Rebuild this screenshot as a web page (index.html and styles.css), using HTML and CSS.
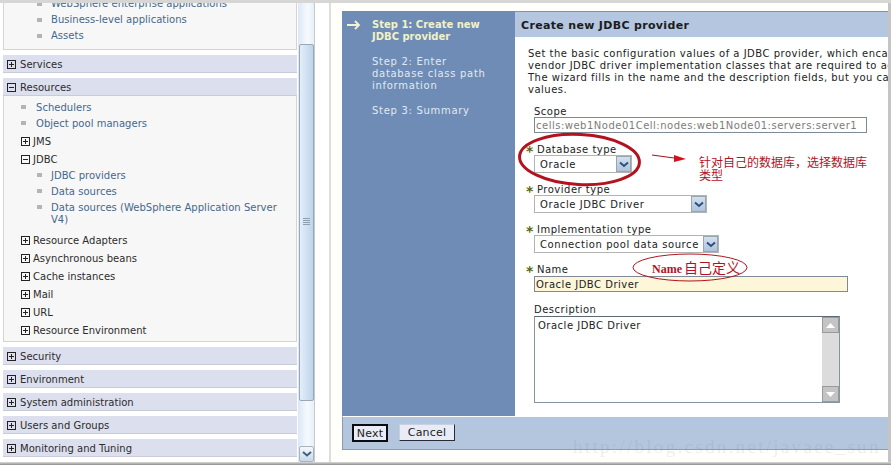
FILE: index.html
```html
<!DOCTYPE html>
<html lang="en">
<head>
<meta charset="utf-8">
<title>Create new JDBC provider</title>
<link rel="stylesheet" href="styles.css">
</head>
<body>
<div class="page">
  <div class="strip"></div>
  <div class="content">
    <nav class="nav">
      <div class="panel panel-first">
        <div class="leaf leaf-deep">WebSphere enterprise applications</div>
        <div class="leaf leaf-deep">Business-level applications</div>
        <div class="leaf leaf-deep">Assets</div>
      </div>
      <div class="head"><i class="tog"></i>Services</div>
      <div class="head head-open"><i class="tog open"></i>Resources</div>
      <div class="panel panel-res">
        <div class="leaf leaf-mid">Schedulers</div>
        <div class="leaf leaf-mid">Object pool managers</div>
        <div class="node node-first"><i class="tog"></i>JMS</div>
        <div class="node"><i class="tog open"></i>JDBC</div>
        <div class="sub">
          <div class="leaf leaf-deep">JDBC providers</div>
          <div class="leaf leaf-deep">Data sources</div>
          <div class="leaf leaf-deep leaf-wrap">Data sources (WebSphere Application Server V4)</div>
        </div>
        <div class="node"><i class="tog"></i>Resource Adapters</div>
        <div class="node"><i class="tog"></i>Asynchronous beans</div>
        <div class="node"><i class="tog"></i>Cache instances</div>
        <div class="node"><i class="tog"></i>Mail</div>
        <div class="node"><i class="tog"></i>URL</div>
        <div class="node"><i class="tog"></i>Resource Environment</div>
      </div>
      <div class="head"><i class="tog"></i>Security</div>
      <div class="head"><i class="tog"></i>Environment</div>
      <div class="head"><i class="tog"></i>System administration</div>
      <div class="head"><i class="tog"></i>Users and Groups</div>
      <div class="head"><i class="tog"></i>Monitoring and Tuning</div>
    </nav>
    <div class="scroll">
      <div class="thumb"><span class="grip"></span></div>
      <div class="scroll-btn">
        <svg width="10" height="6" viewBox="0 0 10 6"><path d="M1 1l4 3.5L9 1" fill="none" stroke="#3f5f86" stroke-width="2"/></svg>
      </div>
    </div>
    <div class="gutter"></div>
    <main class="main">
      <div class="wizard">
        <div class="wizard-top">
          <aside class="steps">
            <div class="step step-on">
              <svg class="step-arrow" width="14" height="10" viewBox="0 0 14 10"><path d="M0 5h12M8 1l4 4-4 4" fill="none" stroke="#f4f2cf" stroke-width="1.8"/></svg>
              Step 1: Create new JDBC provider
            </div>
            <div class="step">Step 2: Enter database class path information</div>
            <div class="step">Step 3: Summary</div>
          </aside>
          <section class="pane">
            <h1 class="pane-title">Create new JDBC provider</h1>
            <div class="form">
              <p class="intro">Set the basic configuration values of a JDBC provider, which encapsulates the specific<br>vendor JDBC driver implementation classes that are required to access the database.<br>The wizard fills in the name and the description fields, but you can type different<br>values.</p>
              <div class="field">
                <div class="label">Scope</div>
                <div class="input input-ro">cells:web1Node01Cell:nodes:web1Node01:servers:server1</div>
              </div>
              <div class="field">
                <div class="label req">Database type</div>
                <div class="select sel-db"><span class="sel-text">Oracle</span><span class="sel-btn"><svg width="10" height="7" viewBox="0 0 10 7"><path d="M1 1.500l4 3.500 4-3.500" fill="none" stroke="#2d4f7c" stroke-width="2"/></svg></span></div>
              </div>
              <div class="field">
                <div class="label req">Provider type</div>
                <div class="select sel-prov"><span class="sel-text">Oracle JDBC Driver</span><span class="sel-btn"><svg width="10" height="7" viewBox="0 0 10 7"><path d="M1 1.500l4 3.500 4-3.500" fill="none" stroke="#2d4f7c" stroke-width="2"/></svg></span></div>
              </div>
              <div class="field">
                <div class="label req">Implementation type</div>
                <div class="select sel-impl"><span class="sel-text">Connection pool data source</span><span class="sel-btn"><svg width="10" height="7" viewBox="0 0 10 7"><path d="M1 1.500l4 3.500 4-3.500" fill="none" stroke="#2d4f7c" stroke-width="2"/></svg></span></div>
              </div>
              <div class="field">
                <div class="label req label-name">Name</div>
                <div class="input input-name">Oracle JDBC Driver</div>
              </div>
              <div class="field field-desc">
                <div class="label label-name">Description</div>
                <div class="area">
                  <div class="area-text">Oracle JDBC Driver</div>
                  <div class="area-bar">
                    <span class="area-btn"><svg width="9" height="5" viewBox="0 0 9 5"><path d="M0 5l4.500-5 4.500 5z" fill="#fff"/></svg></span>
                    <span class="area-btn"><svg width="9" height="5" viewBox="0 0 9 5"><path d="M0 0l4.500 5 4.500-5z" fill="#fff"/></svg></span>
                  </div>
                </div>
              </div>
            </div>
          </section>
        </div>
        <div class="footer">
          <span class="btn btn-next">Next</span>
          <span class="btn btn-cancel">Cancel</span>
        </div>
      </div>
    </main>
    <div class="edge"></div>
  </div>
  <div class="strip strip-bottom"></div>

  <svg class="marks" width="894" height="465" viewBox="0 0 894 465">
    <ellipse cx="579.500" cy="159.500" rx="60" ry="25" transform="rotate(3 579.500 159.500)" fill="none" stroke="#b3121f" stroke-width="3"/>
    <path d="M652 155l22 3" fill="none" stroke="#a01020" stroke-width="1"/>
    <path d="M674 155l12 4-12 3z" fill="#d5101c"/>
    <ellipse cx="690" cy="267.500" rx="57" ry="13.500" fill="none" stroke="#b3121f" stroke-width="1"/>
  </svg>
  <div class="note note-db">针对自己的数据库，选择数据库<br>类型</div>
  <div class="note note-name"><span class="note-latin">Name</span>自己定义</div>
  <div class="watermark">http://blog.csdn.net/javaee_sun</div>
</div>
</body>
</html>
```
FILE: styles.css
```css
html, body { margin: 0; padding: 0; background: #fff; }
.page {
  position: relative;
  width: 894px;
  height: 465px;
  overflow: hidden;
  display: flex;
  flex-direction: column;
  font: 10px/12px "DejaVu Sans", "Noto Sans CJK SC", sans-serif;
  color: #222;
}
.strip { height: 3px; width: 891px; background: #d6d6d6; flex: none; }
.strip-bottom { background: linear-gradient(#dcdcdc, #8c8c8c); }
.content { flex: 1; display: flex; min-height: 0; }

/* navigation */
.nav { width: 294px; margin-left: 3px; flex: none; overflow: hidden; letter-spacing: 0.03px; }
.panel { background: #f7f7f7; border: 1px solid #d4d4d4; border-top: 0; }
.panel-first { margin-top: -7px; padding-bottom: 5px; margin-bottom: 5px; }
.panel-res { padding: 3px 0 2px; margin-bottom: 5px; }
.head {
  height: 18px;
  line-height: 20px;
  margin-bottom: 5px;
  background: #dcdfee;
  border-bottom: 1px solid #c9ccd8;
  box-sizing: border-box;
  padding-left: 17px;
  color: #2c2c2c;
  position: relative;
}
.head-open { margin-bottom: 0; }
.head .tog { left: 4px; top: 5px; }
.tog {
  position: absolute;
  width: 7px;
  height: 7px;
  border: 1px solid #222;
  background:
    linear-gradient(#222, #222) center / 5px 1px no-repeat,
    linear-gradient(#222, #222) center / 1px 5px no-repeat;
}
.tog.open { background: linear-gradient(#222, #222) center / 5px 1px no-repeat; }
.node {
  position: relative;
  height: 18px;
  line-height: 20px;
  padding-left: 29px;
  color: #2c2c2c;
}
.node .tog { left: 17px; top: 5px; }
.node-first { margin-top: 1px; }
.leaf {
  position: relative;
  height: 16px;
  line-height: 16px;
  color: #46688c;
}
.panel-res .leaf { line-height: 18px; }
.leaf::before {
  content: "";
  position: absolute;
  top: 6px;
  width: 5px;
  height: 4px;
  background: #b4b4b4;
}
.leaf-mid { padding-left: 32px; }
.leaf-mid::before { left: 17px; }
.leaf-deep { padding-left: 47px; }
.leaf-deep::before { left: 33px; }
.panel-res .leaf-wrap { height: auto; line-height: 12px; padding-top: 3px; padding-right: 10px; }
.sub { margin: -1px 0 5px; }

/* scrollbar */
.scroll {
  width: 16px;
  margin-left: 1px;
  flex: none;
  position: relative;
  background: linear-gradient(90deg, #dbe8f5, #f6fafe 60%, #e6eff8);
  border-right: 1px solid #c8c8c8;
}
.thumb {
  position: absolute;
  left: 1px;
  right: 0;
  top: 41px;
  height: 357px;
  box-sizing: border-box;
  border: 1px solid #9aa7b6;
  border-radius: 2px;
  background: linear-gradient(90deg, #e4eef8, #bcd5ec);
}
.grip {
  position: absolute;
  left: 3px;
  top: 173px;
  width: 7px;
  height: 7px;
  background: repeating-linear-gradient(#8ca0b5 0 1px, transparent 1px 2px);
}
.scroll-btn {
  position: absolute;
  left: 1px;
  right: 0;
  bottom: 0;
  height: 16px;
  box-sizing: border-box;
  border: 1px solid #a9b4c0;
  border-radius: 2px;
  background: linear-gradient(#f4f8fc, #c8d8e8);
  display: flex;
  align-items: center;
  justify-content: center;
}
.gutter {
  width: 16px;
  flex: none;
  box-sizing: border-box;
  border-right: 2px solid #dedede;
  background: #fff;
}

/* wizard */
.main { flex: 1; min-width: 0; padding: 8px 0 0 11px; background: #fffffb; }
.wizard { width: 546px; }
.wizard-top { display: flex; height: 405px; }
.steps {
  width: 173px;
  flex: none;
  box-sizing: border-box;
  background: #6e8cb5;
  padding: 8px 20px 0 30px;
  color: #e2e9f3;
  line-height: 12px;
  letter-spacing: 0.7px;
}
.step { position: relative; margin-bottom: 13px; }
.step-on { color: #f3f1c6; font-weight: bold; letter-spacing: 0; }
.step-arrow { position: absolute; left: -25px; top: 1px; }
.pane { flex: 1; min-width: 0; background: #fff; overflow: hidden; letter-spacing: 0.5px; }
.pane-title {
  margin: 0;
  height: 26px;
  box-sizing: border-box;
  border-top: 1px solid #7f93ad;
  padding-left: 6px;
  background: #b4c6e0;
  font-size: 11px;
  line-height: 27px;
  font-weight: bold;
  color: #1c1c1c;
  letter-spacing: 0.33px;
}
.form { padding: 11px 0 0 13px; }
.intro { margin: 0 0 -1px; white-space: nowrap; line-height: 12px; color: #222; }
.field { margin: 10px 0 0 6px; }
.field-desc { margin-top: 11px; }
.label { height: 12px; line-height: 14px; }
.req { padding-left: 3px; position: relative; }
.req::before {
  content: "*";
  position: absolute;
  left: -8px;
  top: 1px;
  color: #57651c;
  font-size: 14px;
  font-weight: bold;
}
.label-name { margin-bottom: 1px; }
.input {
  height: 16px;
  box-sizing: border-box;
  border: 1px solid #7f8a96;
  line-height: 16px;
  padding-left: 1px;
  white-space: nowrap;
}
.input-ro { width: 333px; color: #7c7c7c; }
.input-name { width: 314px; background: #fdf6d9; }
.select {
  height: 18px;
  box-sizing: border-box;
  border: 1px solid #b3b3b3;
  display: flex;
  background: #fff;
  line-height: 18px;
}
.sel-text { flex: 1; padding-left: 5px; white-space: nowrap; letter-spacing: 0.58px; }
.sel-btn {
  width: 15px;
  flex: none;
  border: 1px solid #9aa5b2;
  box-sizing: border-box;
  background: linear-gradient(#d3e0ef, #aec3dc);
  display: flex;
  align-items: center;
  justify-content: center;
}
.sel-db { width: 98px; }
.sel-prov { width: 173px; }
.sel-impl { width: 185px; }
.area {
  width: 306px;
  height: 87px;
  box-sizing: border-box;
  border: 1px solid #8a949e;
  border-top-color: #5d6873;
  display: flex;
  background: #fff;
}
.area-text { flex: 1; padding: 3px; }
.area-bar {
  width: 17px;
  background: #dcdcdc;
  display: flex;
  flex-direction: column;
  justify-content: space-between;
}
.area-btn {
  height: 16px;
  box-sizing: border-box;
  border: 1px solid #9a9a9a;
  background: #c4c4c4;
  display: flex;
  align-items: center;
  justify-content: center;
}
.footer {
  height: 34px;
  box-sizing: border-box;
  border-left: 1px solid #8f9bab;
  border-bottom: 1px solid #8f9bab;
  border-top: 1px solid #fff;
  background: #b4c5de;
  padding: 7px 0 0 9px;
  display: flex;
  align-items: flex-start;
  gap: 11px;
}
.btn {
  box-sizing: border-box;
  background: #e8ecf6;
  font-size: 11px;
  color: #222;
  text-align: center;
  letter-spacing: 0.2px;
}
.btn-next { width: 36px; height: 18px; line-height: 15px; border: 2px solid #0b0b14; }
.btn-cancel { width: 56px; height: 17px; line-height: 15px; border: 1px solid #2b2b38; border-left-color: #c8d0e0; border-top-color: #c8d0e0; }
.edge { width: 3px; flex: none; background: #c4c4c4; margin-right: 3px; }

/* annotations drawn over the screenshot */
.marks { position: absolute; left: 0; top: 0; pointer-events: none; }
.note { position: absolute; color: #b3121f; font-family: "Noto Sans CJK SC", sans-serif; }
.note-db { left: 699px; top: 155px; width: 175px; font-size: 12px; line-height: 13px; }
.note-name { left: 652px; top: 259px; font-size: 14px; line-height: 16px; white-space: nowrap; }
.note-latin { font-family: "Liberation Serif", serif; font-size: 12px; font-weight: bold; margin-right: 2px; }
.watermark {
  position: absolute;
  left: 573px;
  top: 437px;
  font: 19px/20px "Liberation Serif", serif;
  letter-spacing: 2.3px;
  color: rgba(120, 125, 135, 0.14);
  white-space: nowrap;
}
```
